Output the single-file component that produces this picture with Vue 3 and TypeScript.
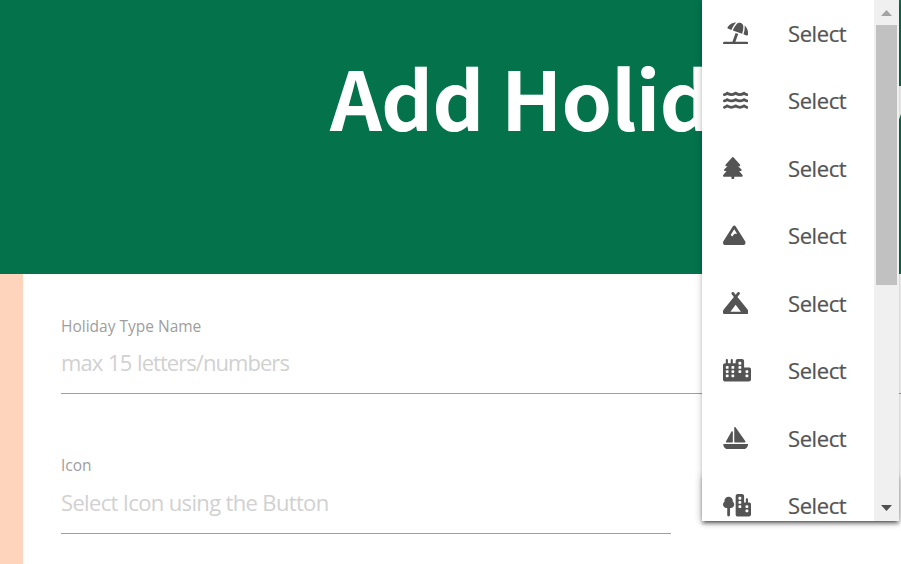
<script setup lang="ts">
interface MenuIcon {
  name: string
  width: number
  paths: string[]
}

const wave = 'M269.5 69.9c11.1-7.9 25.9-7.9 37 0C329 85.4 356.5 96 384 96c26.9 0 55.4-10.8 77.4-26.1c11.9-8.5 28.1-7.8 39.2 1.7c14.4 11.9 32.5 21 50.6 25.2c17.2 4 27.9 21.2 23.9 38.4s-21.2 27.9-38.4 23.9c-24.5-5.7-44.9-16.5-58.2-25C449.5 149.7 417 160 384 160c-31.9 0-60.6-9.9-80.4-18.9c-5.8-2.7-11.1-5.3-15.6-7.7c-4.5 2.4-9.7 5.1-15.6 7.7c-19.8 9-48.5 18.9-80.4 18.9c-33 0-65.5-10.3-94.5-25.8c-13.4 8.4-33.7 19.3-58.2 25c-17.2 4-34.4-6.7-38.4-23.9s6.7-34.4 23.9-38.4C42.8 92.6 61 83.5 75.3 71.6c11.1-9.5 27.3-10.1 39.2-1.7C136.7 85.2 165.1 96 192 96c27.5 0 55-10.6 77.5-26.1z'

// The wave mixes absolute and relative commands, so each row is shifted by a transform.
const waveRows = [0, 144, 288]

const pane = (x: number, y: number): string =>
  `M${x + 16} ${y}h32c8.8 0 16 7.2 16 16v32c0 8.8-7.2 16-16 16h-32c-8.8 0-16-7.2-16-16v-32c0-8.8 7.2-16 16-16z`
const column = (x: number, rows: number[]): string => rows.map((y) => pane(x, y)).join('')

const icons: MenuIcon[] = [
  {
    name: 'umbrella-beach',
    width: 576,
    paths: ['M346.3 271.8l-60.1-21.9L214 448H32c-17.7 0-32 14.3-32 32s14.3 32 32 32H544c17.7 0 32-14.3 32-32s-14.3-32-32-32H282.1l64.1-176.2zm121.1-.2l-3.3 9.1 67.7 24.6c18.1 6.6 38-4.2 39.6-23.4c6.5-78.5-23.9-155.5-80.8-208.5c2 8 3.2 16.3 3.4 24.8l.2 6c1.8 57-7.3 113.8-26.8 167.4zM462 99.1c-1.1-34.4-22.5-64.8-54.4-77.4c-.9-.4-1.9-.7-2.8-1.1c-33-11.7-69.8-2.4-93.1 23.8l-4 4.5C272.4 88.3 245 134.2 226.8 184l-3.3 9.1L434 269.7l3.3-9.1c18.1-49.8 26.6-102.5 24.9-155.5l-.2-6zM107.2 112.9c-11.1 15.7-2.8 36.8 15.3 43.4l71 25.8 3.3-9.1c19.5-53.6 49.1-103 87.1-145.5l4-4.5c6.2-6.9 13.1-13 20.5-18.2c-79.6 2.5-154.7 42.2-201.2 108z'],
  },
  { name: 'water', width: 576, paths: [wave] },
  {
    name: 'tree',
    width: 448,
    paths: ['M210.6 5.9L62 169.4c-3.9 4.2-6 9.8-6 15.5C56 197.7 66.3 208 79.1 208H104L30.6 281.4c-4.2 4.2-6.6 10-6.6 16C24 309.9 34.1 320 46.6 320H80L5.4 409.5C1.9 413.7 0 419 0 424.5c0 13 10.5 23.5 23.5 23.5H192v32c0 17.7 14.3 32 32 32s32-14.3 32-32V448H424.5c13 0 23.5-10.5 23.5-23.5c0-5.5-1.9-10.8-5.4-15L368 320h33.4c12.5 0 22.6-10.1 22.6-22.6c0-6-2.4-11.8-6.6-16L344 208h24.9c12.7 0 23.1-10.3 23.1-23.1c0-5.7-2.1-11.3-6-15.5L237.4 5.9C234 2.1 229.1 0 224 0s-10 2.1-13.4 5.9z'],
  },
  {
    name: 'mountain',
    width: 512,
    paths: ['M256 32c12.5 0 24.1 6.4 30.8 17L503.4 394.4c5.6 8.9 8.6 19.2 8.6 29.7c0 30.9-25 55.9-55.9 55.9H55.9C25 480 0 455 0 424.1c0-10.5 3-20.8 8.6-29.7L225.2 49c6.6-10.6 18.3-17 30.8-17zm65 192L256 120.4 176.9 246.5l18.3 24.4c6.4 8.5 19.2 8.5 25.6 0l25.6-34.1c6-8.1 15.5-12.8 25.6-12.8h49z'],
  },
  {
    name: 'campground',
    width: 576,
    paths: ['M377 52c11-13.8 8.8-33.9-5-45s-33.9-8.8-45 5L288 60.8 249 12c-11-13.8-31.2-16-45-5s-16 31.2-5 45l48 60L12.3 405.4C4.3 415.4 0 427.7 0 440.4V464c0 26.5 21.5 48 48 48H528c26.5 0 48-21.5 48-48V440.4c0-12.7-4.3-25.1-12.3-35L329 112l48-60zM288 448H168.5L288 291.7 407.5 448H288z'],
  },
  {
    name: 'city',
    width: 640,
    paths: [
      'M480 48c0-26.5-21.5-48-48-48H336c-26.5 0-48 21.5-48 48V96H224V24c0-13.3-10.7-24-24-24s-24 10.7-24 24V96H112V24c0-13.3-10.7-24-24-24S64 10.7 64 24V96H48C21.5 96 0 117.5 0 144V464c0 26.5 21.5 48 48 48H592c26.5 0 48-21.5 48-48V240c0-26.5-21.5-48-48-48H480V48z' +
        column(64, [160, 256, 352]) + column(192, [160, 256, 352]) + column(352, [64, 160, 256]) + column(512, [256, 352]),
    ],
  },
  {
    name: 'sailboat',
    width: 576,
    paths: ['M256 16c0-7 4.5-13.2 11.2-15.3s13.9 .4 17.9 6.1l224 320c3.4 4.9 3.8 11.3 1.1 16.6s-8.2 8.6-14.2 8.6H272c-8.8 0-16-7.2-16-16V16zM212.1 96.5c7 1.9 11.9 8.2 11.9 15.5V336c0 8.8-7.2 16-16 16H80c-5.7 0-11-3-13.8-8s-2.9-11-.1-16l128-224c3.6-6.3 11-9.4 18-7.5zM5.7 404.3C2.8 394.1 10.5 384 21.1 384H554.9c10.6 0 18.3 10.1 15.4 20.3l-4 14.3C550.7 473.9 500.4 512 443 512H133C75.6 512 25.3 473.9 9.7 418.7l-4-14.3z'],
  },
  {
    name: 'tree-city',
    width: 640,
    paths: [
      'M288 48c0-26.5 21.5-48 48-48h96c26.5 0 48 21.5 48 48V192h40V120c0-13.3 10.7-24 24-24s24 10.7 24 24v72h24c26.5 0 48 21.5 48 48V464c0 26.5-21.5 48-48 48H336c-26.5 0-48-21.5-48-48V48z' +
        column(352, [64, 160, 256]) + column(512, [256, 352]),
      'M224 160c0 6-1 11-2 16 20 14 34 38 34 64 0 44-36 80-80 80h-16v160c0 17.7-14.3 32-32 32s-32-14.3-32-32V320H80c-44 0-80-36-80-80 0-26 14-50 34-64-1-5-2-10-2-16 0-53 43-96 96-96s96 43 96 96z',
    ],
  },
]
</script>

<template>
  <div class="page">
    <header class="banner">
      <h1 class="title">Add Holiday <span class="last-word">Type</span></h1>
    </header>
    <main class="body">
      <form class="form" @submit.prevent>
        <div class="field">
          <label class="label" for="type-name">Holiday Type Name</label>
          <input id="type-name" class="input type-name" type="text" placeholder="max 15 letters/numbers" />
        </div>
        <div class="field icon-field">
          <label class="label" for="type-icon">Icon</label>
          <input id="type-icon" class="input" type="text" placeholder="Select Icon using the Button" />
        </div>
      </form>
    </main>

    <div class="trigger-shadow"></div>
    <div class="dropdown">
      <ul class="options">
        <li v-for="icon in icons" :key="icon.name" class="option">
          <span class="glyph">
            <svg :viewBox="`0 0 ${icon.width} 512`" fill="currentColor" fill-rule="evenodd">
              <template v-if="icon.name === 'water'">
                <path v-for="y in waveRows" :key="y" :d="icon.paths[0]" :transform="`translate(0 ${y})`" />
              </template>
              <template v-else>
                <path v-for="d in icon.paths" :key="d" :d="d" />
              </template>
            </svg>
          </span>
          <span class="option-text">Select</span>
        </li>
      </ul>
      <div class="scrollbar">
        <svg class="arrow" viewBox="0 0 25 25"><path d="M7 16L12.5 10L18 16z" fill="#a3a3a3" /></svg>
        <div class="thumb"></div>
        <svg class="arrow down" viewBox="0 0 25 25"><path d="M7 9L18 9L12.5 15z" fill="#505050" /></svg>
      </div>
    </div>
  </div>
</template>

<style>
body {
  overflow: hidden;
}
</style>

<style scoped>
.page {
  position: relative;
  width: 901px;
  height: 564px;
  overflow: hidden;
  background: #ffd4bc;
  font-family: "Open Sans", "Noto Sans", sans-serif;
}
.banner {
  height: 274px;
  box-sizing: border-box;
  padding: 36px 0 0 330px;
  background: #04734c;
}
.title {
  margin: 0;
  color: #fff;
  font-family: "Noto Sans CJK JP", sans-serif;
  font-size: 81px;
  line-height: 120px;
  font-weight: 700;
  letter-spacing: -0.9px;
  white-space: nowrap;
}
.last-word {
  margin-left: -3px;
}
.body {
  padding-left: 23px;
}
.form {
  height: 290px;
  box-sizing: border-box;
  padding: 42px 0 0 38px;
  background: #fff;
}
.field {
  display: flex;
  flex-direction: column;
  height: 139px;
}
.icon-field {
  width: 610px;
}
.label {
  height: 20px;
  color: #9e9e9e;
  font-size: 15.5px;
  line-height: 20px;
}
.input {
  box-sizing: border-box;
  width: 100%;
  height: 59px;
  padding: 0 0 5px;
  border: 0;
  border-bottom: 1px solid #9e9e9e;
  outline: 0;
  background: transparent;
  font-family: inherit;
  font-size: 22px;
  letter-spacing: -0.65px;
}
.type-name {
  height: 58px;
  padding-bottom: 5px;
  letter-spacing: -0.95px;
  word-spacing: 1px;
}
.input::placeholder {
  color: #d1d1d1;
  opacity: 1;
}
.trigger-shadow,
.dropdown {
  position: absolute;
  left: 702px;
  width: 197px;
  box-shadow: 0 3px 3px rgba(0, 0, 0, 0.14), 0 4.5px 1.5px -3px rgba(0, 0, 0, 0.12), 0 1.5px 7.5px rgba(0, 0, 0, 0.2);
}
.trigger-shadow {
  top: 474px;
  height: 47px;
}
.dropdown {
  top: 0;
  display: flex;
  height: 521px;
  overflow: hidden;
  background: #fff;
}
.options {
  flex: 1;
  margin: -0.75px 0 0;
  padding: 0;
  list-style: none;
  color: #545454;
}
.option {
  display: flex;
  align-items: center;
  height: 67.5px;
  box-sizing: border-box;
  padding-left: 21px;
}
.glyph {
  display: flex;
  width: 65px;
}
.glyph svg {
  display: block;
  height: 22.5px;
}
.option-text {
  font-size: 22px;
  font-weight: 500;
  letter-spacing: -0.4px;
  line-height: 33px;
  -webkit-text-stroke: 0.2px currentColor;
}
.scrollbar {
  display: flex;
  flex-direction: column;
  width: 25px;
  background: #f0f0f0;
}
.arrow {
  width: 25px;
  height: 25px;
}
.thumb {
  height: 260px;
  margin: 0 2px;
  background: #c1c1c1;
}
.down {
  margin-top: auto;
}
</style>
